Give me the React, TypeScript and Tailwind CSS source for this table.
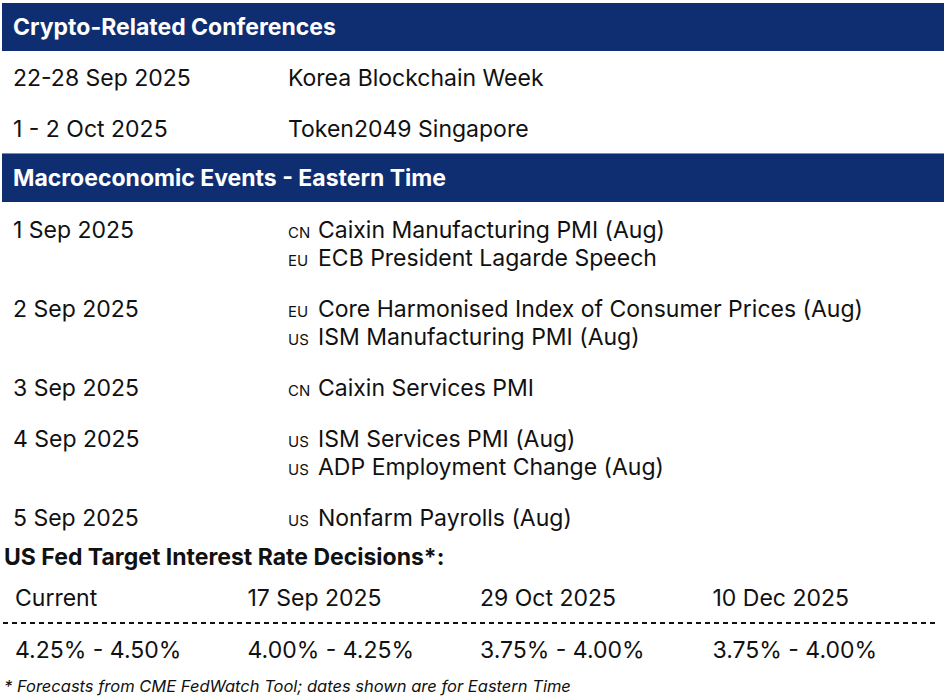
const CONFERENCES = [
  { date: "22-28 Sep 2025", name: "Korea Blockchain Week" },
  { date: "1 - 2 Oct 2025", name: "Token2049 Singapore" },
];

const MACRO = [
  {
    date: "1 Sep 2025",
    events: [
      { code: "CN", name: "Caixin Manufacturing PMI (Aug)" },
      { code: "EU", name: "ECB President Lagarde Speech" },
    ],
  },
  {
    date: "2 Sep 2025",
    events: [
      { code: "EU", name: "Core Harmonised Index of Consumer Prices (Aug)" },
      { code: "US", name: "ISM Manufacturing PMI (Aug)" },
    ],
  },
  { date: "3 Sep 2025", events: [{ code: "CN", name: "Caixin Services PMI" }] },
  {
    date: "4 Sep 2025",
    events: [
      { code: "US", name: "ISM Services PMI (Aug)" },
      { code: "US", name: "ADP Employment Change (Aug)" },
    ],
  },
  { date: "5 Sep 2025", events: [{ code: "US", name: "Nonfarm Payrolls (Aug)" }] },
];

const FED = [
  { label: "Current", value: "4.25% - 4.50%" },
  { label: "17 Sep 2025", value: "4.00% - 4.25%" },
  { label: "29 Oct 2025", value: "3.75% - 4.00%" },
  { label: "10 Dec 2025", value: "3.75% - 4.00%" },
];

function SectionHeader({ title }: { title: string }) {
  return (
    <div className="ml-[2px] mr-[1px] h-[48px] bg-[#0f2e72] flex items-center px-[11px]">
      <span className="text-white font-bold text-[23px] leading-none">{title}</span>
    </div>
  );
}

export default function App() {
  return (
    <div
      className="w-[945px] h-[697px] bg-white text-[#111] overflow-hidden pt-[3px]"
      style={{ fontFamily: "Inter, 'Noto Sans', sans-serif" }}
    >
      {/* Conferences */}
      <SectionHeader title="Crypto-Related Conferences" />
      {CONFERENCES.map((c) => (
        <div key={c.date} className="flex items-center h-[51px] pt-[4px] text-[23px]">
          <div className="w-[288px] pl-[13px]">{c.date}</div>
          <div>{c.name}</div>
        </div>
      ))}

      {/* Macro */}
      <div className="ml-[2px] mr-[1px] h-px bg-[#7d8cab]" />
      <SectionHeader title="Macroeconomic Events - Eastern Time" />
      {MACRO.map((g) => (
        <div key={g.date} className="flex pt-[14px] pb-[9px] text-[23px] leading-[28px]">
          <div className="w-[288px] pl-[13px] h-[28px]">{g.date}</div>
          <div className="flex flex-col">
            {g.events.map((e, i) => (
              <div key={i} className="flex items-baseline h-[28px]">
                <span className="w-[30px] text-[15px] leading-[28px]">{e.code}</span>
                <span className="leading-[28px]">{e.name}</span>
              </div>
            ))}
          </div>
        </div>
      ))}

      {/* Fed */}
      <div className="mt-[2px] pl-[4px] font-bold text-[23px] leading-[28px]">
        US Fed Target Interest Rate Decisions*:
      </div>
      <div className="grid grid-cols-4 pl-[15px] pt-[13px] text-[23px] leading-[28px]">
        {FED.map((f) => (
          <div key={f.label}>{f.label}</div>
        ))}
      </div>
      <div className="ml-[3px] mr-[10px] mt-[10px] h-[2px] bg-[repeating-linear-gradient(to_right,#111_0_5px,transparent_5px_9px)]" />
      <div className="grid grid-cols-4 pl-[15px] pt-[12px] text-[23px] leading-[28px]">
        {FED.map((f) => (
          <div key={f.label}>{f.value}</div>
        ))}
      </div>
      <div className="pl-[4px] pt-[12px] italic text-[16.5px] leading-[20px]">
        * Forecasts from CME FedWatch Tool; dates shown are for Eastern Time
      </div>
    </div>
  );
}
